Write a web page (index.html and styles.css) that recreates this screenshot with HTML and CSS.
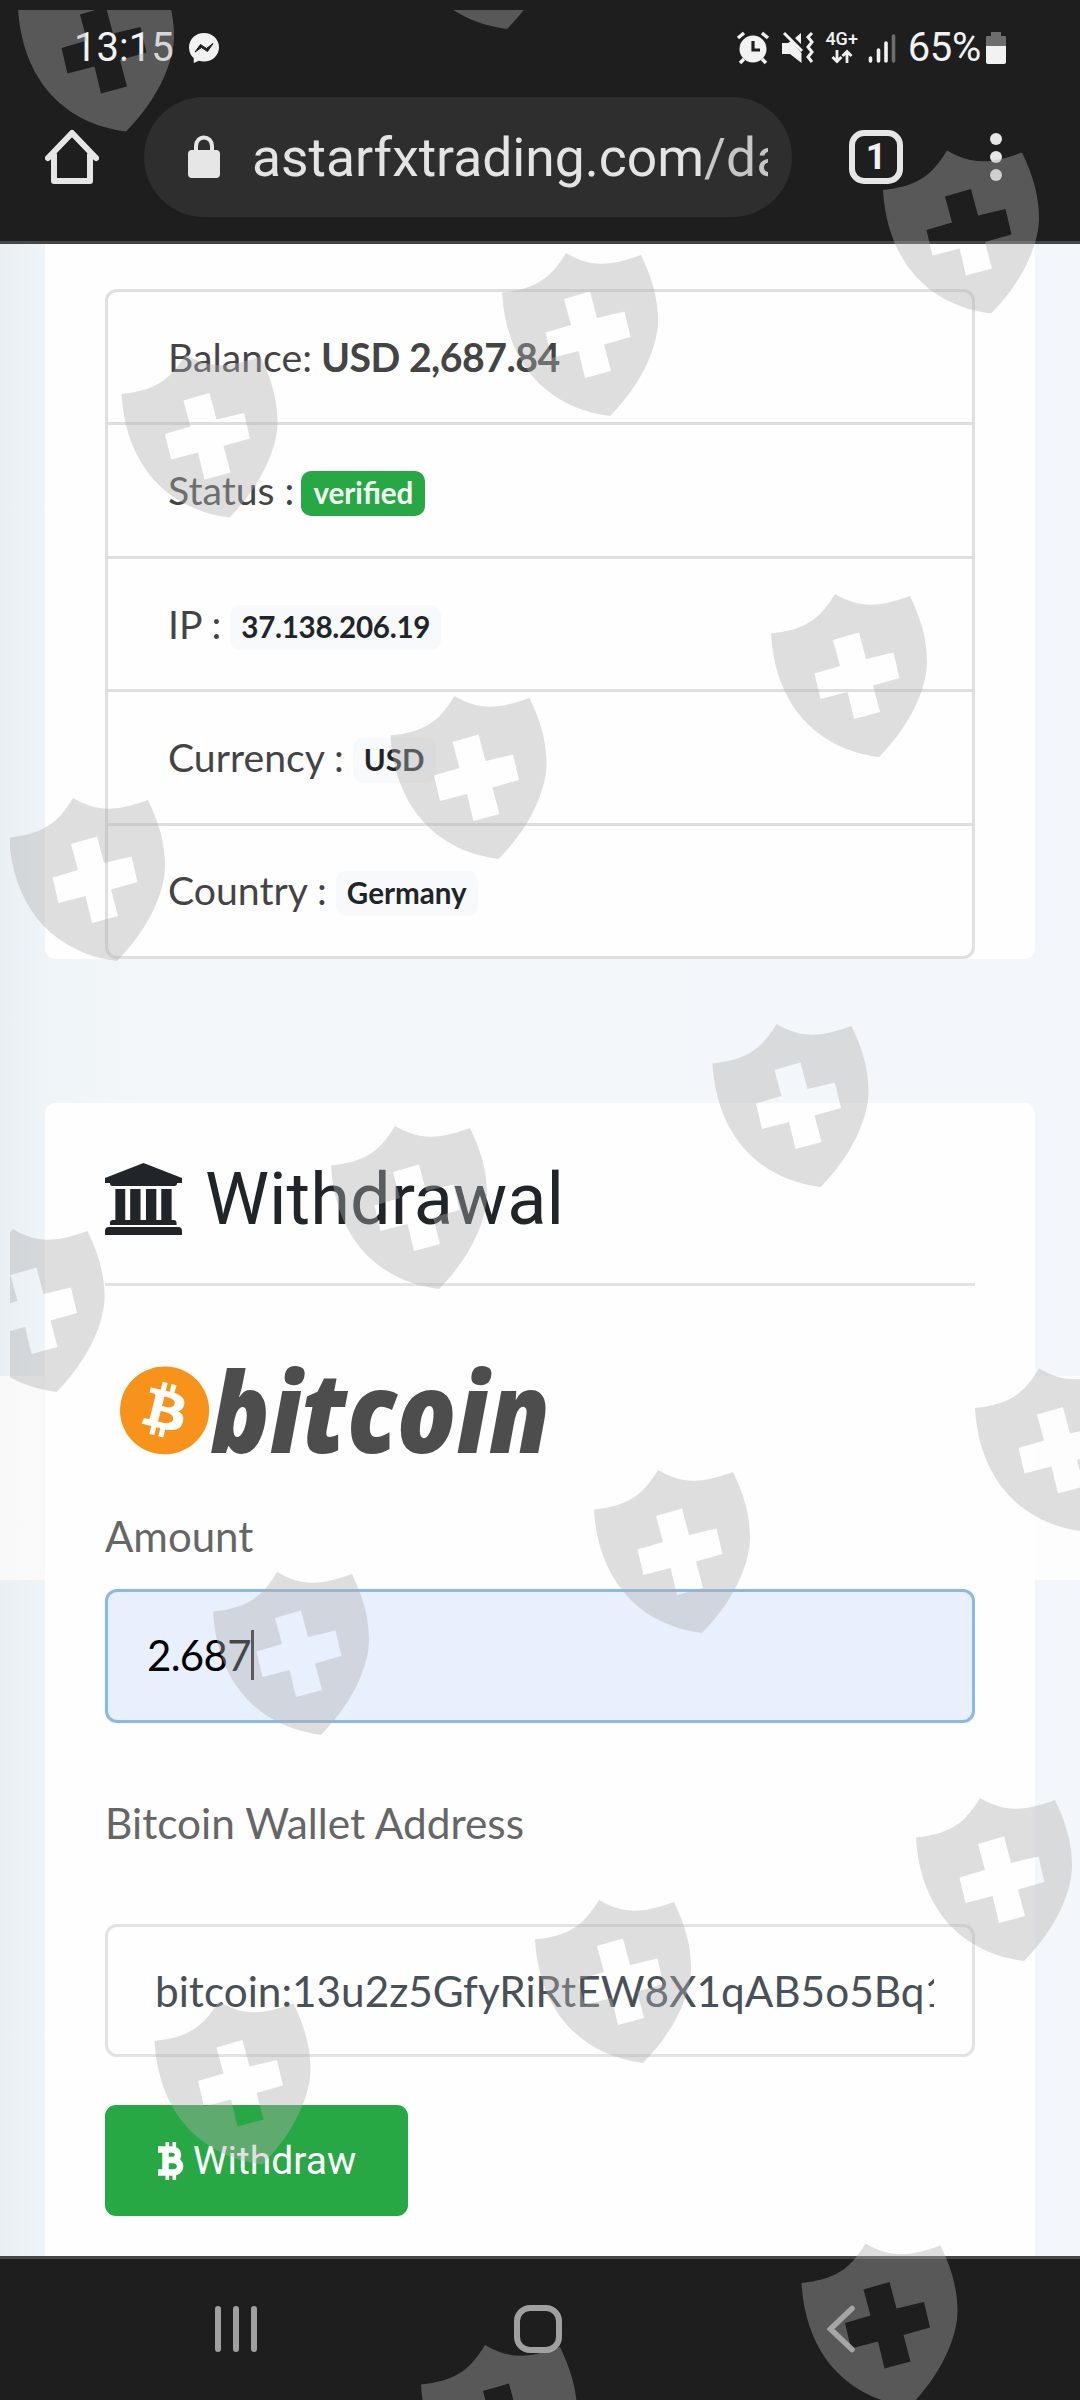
FILE: index.html
```html
<!DOCTYPE html>
<html lang="en">
<head>
<meta charset="utf-8">
<title>Withdrawal</title>
<link rel="stylesheet" href="styles.css">
</head>
<body>
<div class="screen">
  <header class="chrome">
    <div class="statusbar">
      <span class="clock">13:15</span>
      <svg class="messenger" width="32" height="32" viewBox="0 0 32 32"><path fill="#f2f2f2" d="M16 1C7.600 1 1 7.200 1 15.400c0 4.300 1.800 8 4.700 10.600L5.800 31l5-2.200c1.600.5 3.400.8 5.200.8 8.400 0 15-6.200 15-14.300S24.400 1 16 1z"/><path d="M7 20l5.500-7.500 6 4 6.500-5-5.500 8-6-4z" fill="#1e1e1e" stroke="#1e1e1e"/></svg>
      <div class="indicators">
        <svg width="34" height="34" viewBox="0 0 34 34"><circle cx="17" cy="18" r="13.500" fill="#f2f2f2"/><path d="M2 7l6-5M32 7l-6-5M8 28l-4 4M26 28l4 4" stroke="#f2f2f2" stroke-width="3.500"/><path d="M17 10v9h7" fill="none" stroke="#1e1e1e" stroke-width="3.200"/></svg>
        <svg class="mute" width="34" height="34" viewBox="0 0 34 34"><path fill="#f2f2f2" d="M1 12h6l3-2 10.500 12v10L9 23H1zM20 2v11l-6-6z"/><path d="M3 2l18 18" stroke="#f2f2f2" stroke-width="3"/><path d="M31 2l-4 4 4 5-4 5 4 5-4 5 4 5" fill="none" stroke="#f2f2f2" stroke-width="3"/></svg>
        <div class="network"><span>4G+</span><svg width="24" height="15" viewBox="0 0 24 15"><path d="M7 1v11M2.500 8L7 12.500 11.500 8M17 14V3M12.500 7L17 2.500 21.500 7" fill="none" stroke="#f2f2f2" stroke-width="2.800"/></svg></div>
        <svg class="signal" width="28" height="32" viewBox="0 0 28 32"><g stroke="#f2f2f2" stroke-width="3.600" stroke-linecap="round"><path d="M2.500 26v3M10.500 18v11M18 11v18"/><path stroke="#6d6d6d" d="M25.500 4v25"/></g></svg>
        <span class="percent">65%</span>
        <svg width="20" height="32" viewBox="0 0 20 32"><path fill="#6d6d6d" d="M5 0h10v4h4a1 1 0 0 1 1 1v9H0V5a1 1 0 0 1 1-1h4z"/><path fill="#f2f2f2" d="M0 14h20v16a2 2 0 0 1-2 2H2a2 2 0 0 1-2-2z"/></svg>
      </div>
    </div>
    <div class="toolbar">
      <svg class="home" width="54" height="56" viewBox="0 0 54 56"><path d="M3 29L27 4l24 25M9 26v26h36V26" fill="none" stroke="#e6e6e6" stroke-width="6" stroke-linejoin="round" stroke-linecap="round"/></svg>
      <div class="address">
        <svg class="lock" width="32" height="44" viewBox="0 0 32 44"><rect y="15" width="32" height="28" rx="4" fill="#e6e6e6"/><path d="M8 17v-6a8 8.500 0 0 1 16 0v6" fill="none" stroke="#e6e6e6" stroke-width="4"/></svg>
        <span class="url">astarfxtrading.com<span class="path">/da</span></span>
      </div>
      <div class="tabs">1</div>
      <svg class="more" width="12" height="50" viewBox="0 0 12 50" fill="#e6e6e6"><circle cx="6" cy="7" r="6"/><circle cx="6" cy="25" r="6"/><circle cx="6" cy="43" r="6"/></svg>
    </div>
  </header>

  <main class="page">
    <section class="card account">
      <ul class="details">
        <li>Balance:&nbsp;<b>USD 2,687.84</b></li>
        <li>Status :&nbsp;<span class="badge success">verified</span></li>
        <li>IP :&nbsp;<span class="badge numeric">37.138.206.19</span></li>
        <li>Currency :&nbsp;<span class="badge">USD</span></li>
        <li>Country :&nbsp;<span class="badge">Germany</span></li>
      </ul>
    </section>

    <section class="card withdrawal">
      <h2 class="title">
        <svg width="77" height="72" viewBox="0 0 78 72" preserveAspectRatio="none" fill="#212529"><path d="M39 0l39 15v5h-5q0 3-2.500 3h-63Q5 23 5 20H0v-5zM10.500 26h10v31h5V26h10.500v31h5.500V26h10.500v31h5V26h10.500v31h2.500q2.500 0 2.500 2.500V62H5v-2.500Q5 57 7.500 57h3zM4 64h70q4 0 4 4v4H0v-4q0-4 4-4z"/></svg>
        <span>Withdrawal</span>
      </h2>
      <hr class="rule">
      <svg class="logo" width="450" height="92" viewBox="0 0 450 92">
        <g transform="translate(15 2.500) scale(3.720 3.660)"><circle cx="12" cy="12" r="11.500" fill="#fff"/><path fill="#f7931a" d="M23.638 14.904c-1.602 6.430-8.113 10.340-14.542 8.736C2.670 22.050-1.244 15.525.362 9.105 1.962 2.670 8.475-1.243 14.900.358c6.430 1.605 10.342 8.115 8.738 14.548v-.002zm-6.350-4.613c.24-1.590-.974-2.450-2.640-3.030l.54-2.153-1.315-.33-.525 2.107c-.345-.087-.705-.167-1.064-.25l.526-2.127-1.320-.33-.54 2.165c-.285-.067-.565-.132-.84-.2l-1.815-.45-.35 1.407s.975.225.955.236c.535.136.63.486.615.766l-1.477 5.920c-.075.166-.24.406-.614.314.015.02-.96-.24-.96-.24l-.66 1.510 1.710.426.93.242-.54 2.190 1.320.327.54-2.170c.36.1.705.19 1.050.273l-.51 2.154 1.320.33.545-2.190c2.240.427 3.930.257 4.640-1.774.57-1.637-.03-2.580-1.217-3.196.854-.193 1.500-.76 1.680-1.930h.01zm-3.010 4.220c-.404 1.640-3.157.75-4.050.53l.72-2.900c.896.23 3.757.67 3.330 2.370zm.41-4.240c-.37 1.490-2.662.735-3.405.55l.654-2.640c.744.18 3.137.524 2.750 2.084v.006z"/></g>
        <text class="wordmark" x="105" y="89" textLength="340" lengthAdjust="spacingAndGlyphs">bitcoin</text>
      </svg>
      <label class="label">Amount</label>
      <div class="field active"><span>2.687</span><i class="caret"></i></div>
      <label class="label wallet">Bitcoin Wallet Address</label>
      <div class="field address-field"><span class="clip">bitcoin:13u2z5GfyRiRtEW8X1qAB5o5Bq1</span></div>
      <button class="submit">
        <svg width="28" height="38" viewBox="0 0 28 38" fill="none" stroke="#fff"><path stroke-width="6.500" d="M8.500 6v26M1 7.500h14c8 0 8 10.500 0 10.500H9h7c9.500 0 9.500 12.500 0 12.500H1"/><path stroke-width="3.600" d="M10.300 0v6M17.300 0v6M10.300 32v6M17.300 32v6"/></svg>
        <span>Withdraw</span>
      </button>
    </section>
  </main>

  <footer class="navbar">
    <svg class="recents" width="42" height="46" viewBox="0 0 42 46"><path d="M3 3v40M21 3v40M39 3v40" stroke="#a0a0a0" stroke-width="6" stroke-linecap="round"/></svg>
    <svg class="nav-home" width="48" height="48" viewBox="0 0 48 48"><rect x="3" y="3" width="42" height="42" rx="13" fill="none" stroke="#a0a0a0" stroke-width="6"/></svg>
    <svg class="back" width="28" height="48" viewBox="0 0 28 48"><path d="M25 3.500L3.500 24 25 44.500" fill="none" stroke="#a0a0a0" stroke-width="5.500" stroke-linecap="round"/></svg>
  </footer>

  <svg class="watermark" width="1070" height="2390" viewBox="10 10 1070 2390">
    <defs>
      <path id="shield" fill-rule="evenodd" d="M0 39.500C32 36 48 27 64 0C88 14 106 14 139 2C150 25 156 45 156 68S142 129 108 163C45 155 4 110 0 39.500zM62 46L69 72L43.500 79.500L49.500 105L76.500 98L83 125L109 118L102 91.500L128.500 84L122.500 58.500L95 65L88 38.500z"/>
    </defs>
    <g fill="#afafaf" fill-opacity=".4">
      <use href="#shield" x="18" y="-31.500"/><use href="#shield" x="399" y="-134"/>
      <use href="#shield" x="883" y="150.500"/><use href="#shield" x="502" y="253"/>
      <use href="#shield" x="121.500" y="354.500"/><use href="#shield" x="771" y="594"/>
      <use href="#shield" x="390.500" y="696"/><use href="#shield" x="9" y="798"/>
      <use href="#shield" x="712.500" y="1024"/><use href="#shield" x="331" y="1126"/>
      <use href="#shield" x="-51.500" y="1229"/><use href="#shield" x="975" y="1368.500"/>
      <use href="#shield" x="594" y="1470"/><use href="#shield" x="213" y="1572"/>
      <use href="#shield" x="916" y="1798"/><use href="#shield" x="535" y="1900"/>
      <use href="#shield" x="154.500" y="2001.500"/><use href="#shield" x="801.500" y="2243.500"/>
      <use href="#shield" x="421" y="2345"/>
    </g>
  </svg>
</div>
</body>
</html>
```

FILE: styles.css
```css
* { box-sizing: border-box; }
body { margin: 0; font-family: Lato, sans-serif; }
svg { display: block; flex: none; }

.screen {
  position: relative;
  width: 1080px;
  height: 2400px;
  overflow: hidden;
  display: flex;
  flex-direction: column;
}

/* Browser chrome */
.chrome {
  height: 244px;
  background: #1e1e1e;
  border-bottom: 3px solid #444648;
  font-family: Roboto, sans-serif;
  color: #f2f2f2;
}
.statusbar {
  height: 97px;
  padding: 0 74px 2px;
  display: flex;
  align-items: center;
}
.clock { font-size: 40px; }
.messenger { margin-left: 14px; }
.indicators { margin-left: auto; display: flex; align-items: center; }
.mute { margin-left: 11px; }
.network {
  margin-left: 9px;
  width: 36px;
  display: flex;
  flex-direction: column;
  align-items: center;
  gap: 3px;
  font-size: 18px;
  line-height: 15px;
  font-weight: 500;
}
.signal { margin-left: 8px; }
.percent { margin: 0 5px 0 12px; font-size: 40px; letter-spacing: -.3px; }

.toolbar {
  height: 120px;
  padding: 0 78px 0 45px;
  display: flex;
  align-items: center;
}
.address {
  width: 648px;
  height: 120px;
  margin-left: 45px;
  padding: 0 24px 0 44px;
  border-radius: 60px;
  background: #2e2e2e;
  display: flex;
  align-items: center;
}
.url {
  margin-left: 32px;
  flex: 1;
  overflow: hidden;
  white-space: nowrap;
  font-size: 53.400px;
  color: #e4e4e4;
}
.path { color: #c6c6c6; }
.tabs {
  width: 54px;
  height: 54px;
  margin-left: 57px;
  border: 6px solid #e6e6e6;
  border-radius: 15px;
  font-size: 36px;
  font-weight: 700;
  line-height: 43px;
  text-align: center;
}
.more { margin-left: auto; }

/* Page */
.page {
  height: 2012px;
  padding: 0 45px;
  display: flex;
  flex-direction: column;
  gap: 144px;
  background:
    linear-gradient(90deg, #f9f9f9, #fdfdfd) 0 1132px / 100% 204px no-repeat,
    linear-gradient(90deg, #eaeff3, #eff4f8 45px, #f3f7fa 140px, #f3f7fb);
}
.card { background: #fefefe; }
.account { height: 715px; padding: 45px 60px 0; border-radius: 0 0 10px 10px; }
.withdrawal { height: 1153px; padding: 0 60px; border-radius: 10px 10px 0 0; }

.details {
  margin: 0;
  padding: 0;
  list-style: none;
  height: 670px;
  border: 3px solid #dfdfdf;
  border-radius: 12px;
  display: flex;
  flex-direction: column;
}
.details li {
  flex: 1;
  padding: 0 0 2px 60px;
  display: flex;
  align-items: center;
  font-size: 39.200px;
  color: #444;
}
.details li + li { border-top: 3px solid #dfdfdf; }
.details b { letter-spacing: -.5px; margin-left: -1px; }
.badge {
  margin: 8px 0 0 -1px;
  padding: 0 11px;
  height: 45px;
  line-height: 44px;
  border-radius: 10px;
  font-size: 29.600px;
  font-weight: 700;
  color: #212529;
  background: #f8f9fa;
}
.numeric { letter-spacing: -.3px; }
.success { margin-left: -3px; padding: 0 12px; color: #f4fff6; background: #28a745; }

.title {
  margin: 0;
  height: 180px;
  padding-top: 11px;
  display: flex;
  align-items: center;
  gap: 23px;
  font: 400 72.200px Roboto, sans-serif;
  color: #212529;
}
.title span { padding-top: 2px; }
.rule { margin: 0; border: 0; height: 3px; background: #e3e3e3; }
.logo { margin-top: 78px; overflow: visible; }
.wordmark { font: italic 800 112px "Open Sans", sans-serif; fill: #4d4d4d; }
.label { display: block; margin-top: 55px; height: 50px; line-height: 50px; font-size: 42px; color: #666; }
.field {
  margin-top: 28px;
  height: 134px;
  padding: 0 38px 0 47px;
  border: 3px solid #e3e3e3;
  border-radius: 12px;
  display: flex;
  align-items: center;
  font-size: 42.300px;
  color: #495057;
}
.active {
  padding: 0 38px 3px 39px;
  background: #e8f0fe;
  border-color: #8ab9e3;
  color: #000;
  font-size: 42px;
  letter-spacing: -.7px;
}
.caret { width: 3px; height: 50px; background: #222; }
.wallet { margin-top: 75px; font-size: 42.400px; }
.address-field { margin-top: 76px; height: 133px; }
.clip { overflow: hidden; white-space: nowrap; }
.submit {
  margin-top: 48px;
  width: 303px;
  height: 111px;
  padding: 0 0 0 52px;
  border: 0;
  border-radius: 11px;
  display: flex;
  align-items: center;
  gap: 8px;
  background: #28a745;
  color: #fff;
  font: 39px Roboto, sans-serif;
}

/* System navigation */
.navbar {
  height: 144px;
  padding: 0 225px 2px 215px;
  border-top: 3px solid #444648;
  background: #1e1e1e;
  display: flex;
  align-items: center;
  justify-content: space-between;
}
.nav-home { margin-left: -9px; }

.watermark { position: absolute; left: 10px; top: 10px; pointer-events: none; }
```
